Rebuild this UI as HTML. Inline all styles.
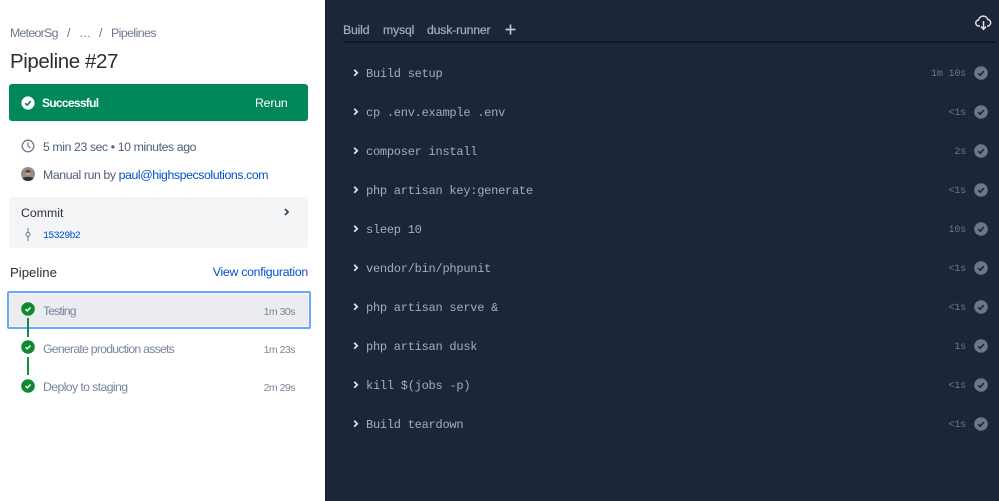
<!DOCTYPE html>
<html><head><meta charset="utf-8"><style>
html,body{margin:0;padding:0;background:#fff}
#p{position:relative;width:999px;height:501px;overflow:hidden;background:#fff;font-family:"Liberation Sans",sans-serif}
#p span,#p div,#p svg{position:absolute;white-space:nowrap}
.b{font-size:12.3px;line-height:16px;color:#6b778c;letter-spacing:-.55px}
.m{font-family:"Liberation Mono",monospace;font-size:12px;letter-spacing:-.25px;color:#a5adba;line-height:14px}
.t{font-family:"Liberation Mono",monospace;font-size:10px;letter-spacing:-.17px;color:#6b778c;line-height:12px;text-align:right;right:33px}
.s{font-size:12.3px;color:#7a869a;line-height:16px;letter-spacing:-.62px}
.d{font-size:10.5px;color:#7a869a;line-height:14px;right:704px;letter-spacing:-.5px}
.n{font-size:12.3px;line-height:16px;color:#a5adba;letter-spacing:-.2px;-webkit-text-stroke:.2px #a5adba}
.x{font-size:12.3px;line-height:16px;color:#505f79;letter-spacing:-.41px}
</style></head><body><div id="p">
<span class="b" style="left:10px;top:25px;letter-spacing:-.7px">MeteorSg</span>
<span class="b" style="left:67px;top:25px">/</span>
<span class="b" style="left:79px;top:25px">…</span>
<span class="b" style="left:99px;top:25px">/</span>
<span class="b" style="left:111px;top:25px">Pipelines</span>
<span style="left:10px;top:49px;font-size:20.5px;line-height:26px;color:#2b2f36;letter-spacing:-.4px">Pipeline #27</span>
<div style="left:9px;top:84px;width:299px;height:37px;background:#00875a;border-radius:3px"></div>
<svg style="left:21px;top:96px" width="14" height="14" viewBox="0 0 14 14"><circle cx="7" cy="7" r="6.6" fill="#fff"/><path d="M4.2 7.2l2 2 3.6-4" fill="none" stroke="#00875a" stroke-width="1.7"/></svg>
<span style="left:42px;top:95px;font-size:12px;line-height:16px;font-weight:bold;color:#fff;letter-spacing:-.7px">Successful</span>
<span style="left:255px;top:95px;font-size:12.3px;line-height:16px;color:#fff;letter-spacing:-.2px">Rerun</span>
<svg style="left:21px;top:139px" width="14" height="14" viewBox="0 0 14 14"><circle cx="7" cy="7" r="5.8" fill="none" stroke="#6b778c" stroke-width="1.3"/><path d="M7 3.5V7l2.3 2" fill="none" stroke="#6b778c" stroke-width="1.2"/></svg>
<span class="x" style="left:43px;top:139px">5 min 23 sec • 10 minutes ago</span>
<svg style="left:21px;top:167px" width="14" height="14" viewBox="0 0 14 14"><circle cx="7" cy="7" r="7" fill="#8f8f8f"/><path d="M1.5 11.5C3 9.3 11 9.3 12.5 11.5 11 13.5 9 14 7 14s-4-.5-5.5-2.5z" fill="#2f343b"/><circle cx="7" cy="5.8" r="2.8" fill="#c79d85"/><path d="M4.2 5.5a2.800 2.800 0 0 1 5.600 0z" fill="#4a423d"/></svg>
<span class="x" style="left:43px;top:167px">Manual run by <span style="position:static;color:#0052cc">paul@highspecsolutions.com</span></span>
<div style="left:9px;top:197px;width:299px;height:51px;background:#f4f5f7;border-radius:3px"></div>
<span style="left:21px;top:205px;font-size:12.3px;line-height:16px;color:#2b2f36">Commit</span>
<svg style="left:283px;top:207px" width="8" height="10" viewBox="0 0 8 10"><path d="M2 2l3 3-3 3" fill="none" stroke="#344563" stroke-width="1.700"/></svg>
<svg style="left:24px;top:228px" width="8" height="13" viewBox="0 0 8 13"><path d="M4 0v4.500M4 8.500V13" stroke="#6b778c" stroke-width="1"/><circle cx="4" cy="6.500" r="2" fill="none" stroke="#6b778c" stroke-width="1"/></svg>
<span style="left:43px;top:231px;font-family:'Liberation Mono',monospace;font-size:10px;letter-spacing:-.7px;line-height:12px;color:#0052cc">15329b2</span>
<span style="left:10px;top:264px;font-size:13.2px;line-height:17px;color:#2b2f36">Pipeline</span>
<span style="right:691px;top:264px;font-size:12.3px;line-height:16px;color:#0052cc;letter-spacing:-.28px">View configuration</span>
<div style="left:7px;top:291px;width:300px;height:34px;background:#ebecf0;border:2px solid #6aa8ff;border-radius:2px;box-shadow:inset 0 0 0 1px #f4f5f7"></div>
<div style="left:27px;top:318px;width:2px;height:19px;background:#1a8a3a"></div>
<div style="left:27px;top:357px;width:2px;height:18px;background:#1a8a3a"></div>
<svg style="left:21px;top:302px" width="14" height="14" viewBox="0 0 14 14"><circle cx="7" cy="7" r="6.8" fill="#108a31"/><path d="M4.600 7.200l1.700 1.700 3.200-3.400" fill="none" stroke="#fff" stroke-width="1.500"/></svg>
<svg style="left:21px;top:340px" width="14" height="14" viewBox="0 0 14 14"><circle cx="7" cy="7" r="6.8" fill="#108a31"/><path d="M4.600 7.200l1.700 1.700 3.200-3.400" fill="none" stroke="#fff" stroke-width="1.500"/></svg>
<svg style="left:21px;top:379px" width="14" height="14" viewBox="0 0 14 14"><circle cx="7" cy="7" r="6.8" fill="#108a31"/><path d="M4.600 7.200l1.700 1.700 3.200-3.400" fill="none" stroke="#fff" stroke-width="1.500"/></svg>
<span class="s" style="left:43px;top:303px;letter-spacing:-.9px">Testing</span>
<span class="s" style="left:43px;top:341px;letter-spacing:-.77px">Generate production assets</span>
<span class="s" style="left:43px;top:379px">Deploy to staging</span>
<span class="d" style="top:305px">1m 30s</span>
<span class="d" style="top:343px">1m 23s</span>
<span class="d" style="top:381px">2m 29s</span>
<div style="left:325px;top:0;width:674px;height:501px;background:#1b2638"></div>
<div style="left:325px;top:0;width:1px;height:501px;background:#111a2b"></div>
<span class="n" style="left:343px;top:22px">Build</span>
<span class="n" style="left:383px;top:22px">mysql</span>
<span class="n" style="left:427px;top:22px">dusk-runner</span>
<svg style="left:505px;top:24px" width="11" height="11" viewBox="0 0 11 11"><path d="M5.500 0.500v10M0.500 5.500h10" stroke="#c1c7d0" stroke-width="1.700"/></svg>
<div style="left:343px;top:41px;width:654px;height:2px;background:#0f1728"></div>
<svg style="left:975px;top:14px" width="17" height="17" viewBox="0 0 17 17"><path d="M5 12H4a3 3 0 0 1-.5-6A4.800 4.800 0 0 1 12.800 5.500 3.300 3.300 0 0 1 13 12h-1" fill="none" stroke="#dfe1e6" stroke-width="1.500"/><path d="M8.500 7v8M6 12.500l2.500 2.800 2.500-2.800" fill="none" stroke="#dfe1e6" stroke-width="1.500"/></svg>
<svg width="0" height="0"><defs><g id="a"><path d="M1.200 .8l3 3-3 3" fill="none" stroke="#dfe1e6" stroke-width="1.800"/></g><g id="c"><circle cx="7" cy="7" r="6.800" fill="#6b778c"/><path d="M4.200 7.200l2 2 3.600-4" fill="none" stroke="#1b2638" stroke-width="1.600"/></g></defs></svg>
<svg style="left:353px;top:69px" width="6" height="9"><use href="#a"/></svg><span class="m" style="left:366px;top:67px">Build setup</span><span class="t" style="top:69px">1m 10s</span><svg style="left:974px;top:66px" width="14" height="14"><use href="#c"/></svg>
<svg style="left:353px;top:108px" width="6" height="9"><use href="#a"/></svg><span class="m" style="left:366px;top:106px">cp .env.example .env</span><span class="t" style="top:108px">&lt;1s</span><svg style="left:974px;top:105px" width="14" height="14"><use href="#c"/></svg>
<svg style="left:353px;top:147px" width="6" height="9"><use href="#a"/></svg><span class="m" style="left:366px;top:145px">composer install</span><span class="t" style="top:147px">2s</span><svg style="left:974px;top:144px" width="14" height="14"><use href="#c"/></svg>
<svg style="left:353px;top:186px" width="6" height="9"><use href="#a"/></svg><span class="m" style="left:366px;top:184px">php artisan key:generate</span><span class="t" style="top:186px">&lt;1s</span><svg style="left:974px;top:183px" width="14" height="14"><use href="#c"/></svg>
<svg style="left:353px;top:225px" width="6" height="9"><use href="#a"/></svg><span class="m" style="left:366px;top:223px">sleep 10</span><span class="t" style="top:225px">10s</span><svg style="left:974px;top:222px" width="14" height="14"><use href="#c"/></svg>
<svg style="left:353px;top:264px" width="6" height="9"><use href="#a"/></svg><span class="m" style="left:366px;top:262px">vendor/bin/phpunit</span><span class="t" style="top:264px">&lt;1s</span><svg style="left:974px;top:261px" width="14" height="14"><use href="#c"/></svg>
<svg style="left:353px;top:303px" width="6" height="9"><use href="#a"/></svg><span class="m" style="left:366px;top:301px">php artisan serve &amp;</span><span class="t" style="top:303px">&lt;1s</span><svg style="left:974px;top:300px" width="14" height="14"><use href="#c"/></svg>
<svg style="left:353px;top:342px" width="6" height="9"><use href="#a"/></svg><span class="m" style="left:366px;top:340px">php artisan dusk</span><span class="t" style="top:342px">1s</span><svg style="left:974px;top:339px" width="14" height="14"><use href="#c"/></svg>
<svg style="left:353px;top:381px" width="6" height="9"><use href="#a"/></svg><span class="m" style="left:366px;top:379px">kill $(jobs -p)</span><span class="t" style="top:381px">&lt;1s</span><svg style="left:974px;top:378px" width="14" height="14"><use href="#c"/></svg>
<svg style="left:353px;top:420px" width="6" height="9"><use href="#a"/></svg><span class="m" style="left:366px;top:418px">Build teardown</span><span class="t" style="top:420px">&lt;1s</span><svg style="left:974px;top:417px" width="14" height="14"><use href="#c"/></svg>
</div></body></html>
